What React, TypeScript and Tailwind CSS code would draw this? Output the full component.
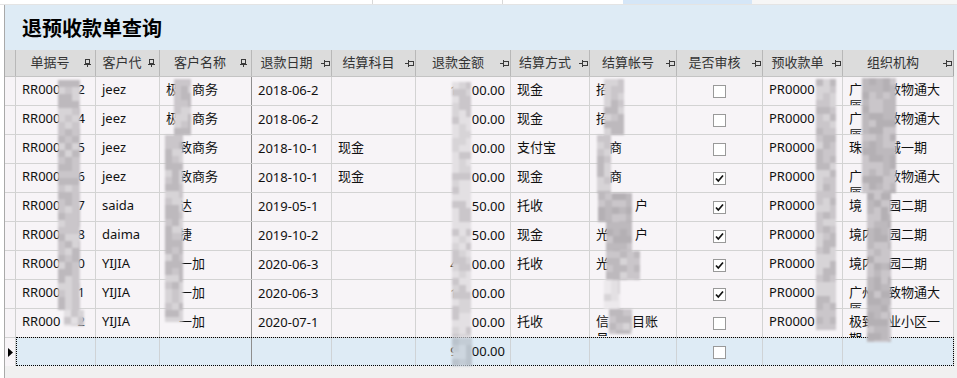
import React from 'react';

type Frag = string | number;
type Lines = Frag[][];

type Row = {
  no: Frag[];
  code: string;
  name: Frag[];
  date: string;
  subj: string;
  amt: Frag[];
  way: string;
  acct: Lines;
  chk: boolean;
  pr: string;
  org: Lines;
};

const rows: Row[] = [
  { no: ['RR000', 17, '2'], code: 'jeez', name: ['极', 13, '商务'], date: '2018-06-2', subj: '', amt: ['1', 14, '00.00'], way: '现金', acct: [['招']], chk: false, pr: 'PR0000', org: [['广', 26, '致物通大'], ['厦']] },
  { no: ['RR000', 17, '4'], code: 'jeez', name: ['极', 13, '商务'], date: '2018-06-2', subj: '', amt: [20, '00.00'], way: '现金', acct: [['招']], chk: false, pr: 'PR0000', org: [['广', 26, '致物通大'], ['厦']] },
  { no: ['RR000', 17, '5'], code: 'jeez', name: [13, '致商务'], date: '2018-10-1', subj: '现金', amt: [20, '00.00'], way: '支付宝', acct: [[13, '商']], chk: false, pr: 'PR0000', org: [['珠', 26, '城一期']] },
  { no: ['RR000', 17, '6'], code: 'jeez', name: [13, '致商务'], date: '2018-10-1', subj: '现金', amt: [20, '00.00'], way: '现金', acct: [[13, '商']], chk: true, pr: 'PR0000', org: [['广', 26, '致物通大'], ['厦']] },
  { no: ['RR000', 17, '7'], code: 'saida', name: [13, '达'], date: '2019-05-1', subj: '', amt: [20, '50.00'], way: '托收', acct: [[39, '户']], chk: true, pr: 'PR0000', org: [['境', 26, '园二期']] },
  { no: ['RR000', 17, '8'], code: 'daima', name: [13, '捷'], date: '2019-10-2', subj: '', amt: [20, '50.00'], way: '现金', acct: [['光', 26, '户']], chk: true, pr: 'PR0000', org: [['境内', 13, '园二期']] },
  { no: ['RR000', 17, '0'], code: 'YIJIA', name: [13, '一加'], date: '2020-06-3', subj: '', amt: ['4', 14, '00.00'], way: '托收', acct: [['光']], chk: true, pr: 'PR0000', org: [['境内', 13, '园二期']] },
  { no: ['RR000', 17, '1'], code: 'YIJIA', name: [13, '一加'], date: '2020-06-3', subj: '', amt: ['1', 14, '00.00'], way: '', acct: [['']], chk: true, pr: 'PR0000', org: [['广州', 13, '致物通大'], ['厦']] },
  { no: ['RR000', 17, '2'], code: 'YIJIA', name: [13, '一加'], date: '2020-07-1', subj: '', amt: [20, '00.00'], way: '托收', acct: [['信', 23, '目账'], ['号']], chk: false, pr: 'PR0000', org: [['极致', 13, '业小区一'], ['期']] },
];

function Frags({ f }: { f: Frag[] }) {
  return (
    <>
      {f.map((x, i) =>
        typeof x === 'number' ? (
          <span key={i} className="inline-block" style={{ width: x }} />
        ) : (
          <span key={i}>{x}</span>
        )
      )}
    </>
  );
}

function PinV() {
  return (
    <svg width="7" height="8" viewBox="0 0 7 8" className="shrink-0">
      <rect x="1.5" y="0.5" width="4" height="4" fill="none" stroke="#3a3a3a" />
      <line x1="0" y1="5.5" x2="7" y2="5.5" stroke="#3a3a3a" />
      <line x1="3.5" y1="5.5" x2="3.5" y2="8" stroke="#3a3a3a" />
    </svg>
  );
}

function PinH() {
  return (
    <svg width="9" height="7" viewBox="0 0 9 7" className="shrink-0">
      <line x1="0" y1="3.5" x2="3.5" y2="3.5" stroke="#3a3a3a" />
      <line x1="3.5" y1="0" x2="3.5" y2="7" stroke="#3a3a3a" />
      <rect x="3.5" y="1.5" width="5" height="4" fill="none" stroke="#3a3a3a" />
    </svg>
  );
}

function Check({ on }: { on: boolean }) {
  return (
    <div className="w-[13px] h-[13px] border border-[#999999] bg-white flex items-center justify-center">
      {on && (
        <svg width="11" height="11" viewBox="0 0 11 11">
          <path d="M2 5.5 L4.3 8 L9 2.5" fill="none" stroke="#111" strokeWidth="1.7" />
        </svg>
      )}
    </div>
  );
}

const headers: { t: string; w: string; pin: 'v' | 'h' }[] = [
  { t: '单据号', w: 'w-[80px]', pin: 'v' },
  { t: '客户代', w: 'w-[64px]', pin: 'v' },
  { t: '客户名称', w: 'w-[92px]', pin: 'v' },
  { t: '退款日期', w: 'w-[80px]', pin: 'h' },
  { t: '结算科目', w: 'w-[84px]', pin: 'h' },
  { t: '退款金额', w: 'w-[95px]', pin: 'h' },
  { t: '结算方式', w: 'w-[79px]', pin: 'h' },
  { t: '结算帐号', w: 'w-[87px]', pin: 'h' },
  { t: '是否审核', w: 'w-[86px]', pin: 'h' },
  { t: '预收款单', w: 'w-[80px]', pin: 'h' },
  { t: '组织机构', w: 'w-[111px]', pin: 'h' },
];

// mosaic smudges (privacy blur in the screenshot)
type Streak = { x0: number; x1: number; y0: number; y1: number; dark: number; blue?: boolean };
const streaks: Streak[] = [
  // 单据号
  { x0: 58, x1: 80, y0: 80, y1: 310, dark: 2 },
  { x0: 64, x1: 84, y0: 310, y1: 326, dark: 1 },
  // 客户名称
  { x0: 174, x1: 191, y0: 79, y1: 135, dark: 2 },
  { x0: 165, x1: 183, y0: 135, y1: 322, dark: 2 },
  // 退款金额
  { x0: 452, x1: 471, y0: 82, y1: 337, dark: 1 },
  { x0: 452, x1: 472, y0: 338, y1: 366, dark: 1, blue: true },
  // 结算帐号
  { x0: 604, x1: 624, y0: 79, y1: 135, dark: 2 },
  { x0: 597, x1: 611, y0: 135, y1: 193, dark: 2 },
  { x0: 598, x1: 632, y0: 193, y1: 222, dark: 3 },
  { x0: 606, x1: 632, y0: 222, y1: 251, dark: 3 },
  { x0: 606, x1: 640, y0: 251, y1: 280, dark: 2 },
  { x0: 604, x1: 620, y0: 280, y1: 309, dark: 0 },
  { x0: 609, x1: 632, y0: 309, y1: 334, dark: 2 },
  // 预收款单
  { x0: 816, x1: 836, y0: 79, y1: 330, dark: 2 },
  // 组织机构
  { x0: 862, x1: 896, y0: 78, y1: 193, dark: 3 },
  { x0: 867, x1: 891, y0: 193, y1: 342, dark: 3 },
];

const greys = ['#ece9ec', '#e3e0e3', '#d7d4d7', '#cac6ca', '#bdb9bd', '#b4b0b4'];
const blues = ['#d6e1ea', '#cdd6df', '#c3ccd5', '#bac3cc'];

function Mosaic() {
  const blocks: { x: number; y: number; w: number; h: number; c: string }[] = [];
  streaks.forEach((s, si) => {
    const step = 7;
    for (let y = s.y0; y < s.y1; y += step) {
      for (let x = s.x0; x < s.x1; x += step) {
        const h = Math.min(step, s.y1 - y);
        const w = Math.min(step, s.x1 - x);
        const r = Math.abs(Math.sin(x * 12.9898 + y * 78.233 + si * 3.1) * 43758.5453) % 1;
        const pal = s.blue ? blues : greys;
        let idx = Math.floor(r * 3) + s.dark;
        if (idx >= pal.length) idx = pal.length - 1;
        blocks.push({ x, y, w, h, c: pal[idx] });
      }
    }
  });
  return (
    <div className="absolute inset-0 pointer-events-none blur-[1px]">
      {blocks.map((b, i) => (
        <div
          key={i}
          className="absolute"
          style={{ left: b.x, top: b.y, width: b.w, height: b.h, background: b.c }}
        />
      ))}
    </div>
  );
}

export default function App() {
  const F = "font-['Noto_Sans','Noto_Sans_CJK_SC',sans-serif]";
  const cellTxt = 'overflow-hidden border-r border-[#d3d3d3] px-[6px] pt-[4px] leading-[17px] whitespace-nowrap';
  return (
    <div className={`relative w-[957px] h-[378px] overflow-hidden bg-white text-[13px] text-[#111] ${F}`}>
      {/* top tab strip remnant */}
      <div className="h-[5px] flex border-b border-[#e4e4e4] bg-white">
        <div className="w-[373px] border-r border-[#d8d8d8]" />
        <div className="w-[130px] border-r border-[#d8d8d8]" />
        <div className="w-[120px]" />
        <div className="w-[129px] bg-[#d5e6f7]" />
        <div className="flex-1 bg-[#f6f6f6]" />
      </div>

      <div className="ml-[4px] border-l border-[#a9a9a9] flex flex-col h-[373px]">
        {/* title */}
        <div className="h-[45px] bg-[#deebf5] flex items-center pl-[17px]">
          <span className="text-[20px] font-bold text-black leading-none font-['Noto_Sans_CJK_SC',sans-serif]">退预收款单查询</span>
        </div>

        {/* grid */}
        <div className="flex-1 bg-[#f0f0f0] flex flex-col">
          {/* header */}
          <div className="flex h-[27px] w-[949px] bg-[#dcdcdc] border-b border-[#c4c4c4] text-[#333333]">
            <div className="w-[11px] border-r border-[#b8b8b8]" />
            {headers.map((h, i) => (
              <div
                key={i}
                className={`${h.w} flex items-center border-r ${i === 10 ? 'border-[#a8a8a8]' : 'border-[#b8b8b8]'} ${h.pin === 'v' ? 'pr-[4px]' : 'pr-[1px]'}`}
              >
                <span className="flex-1 text-center whitespace-nowrap">{h.t}</span>
                {h.pin === 'v' ? <PinV /> : <PinH />}
              </div>
            ))}
          </div>

          {/* rows */}
          {rows.map((r, i) => (
            <div key={i} className="flex h-[29px] w-[949px] bg-[#f7f4f7] border-b border-[#d3d3d3]">
              <div className="w-[11px] border-r border-[#d0d0d0]" />
              <div className={`w-[80px] ${cellTxt}`}><Frags f={r.no} /></div>
              <div className={`w-[64px] ${cellTxt}`}>{r.code}</div>
              <div className="w-[92px] overflow-hidden border-r border-[#8e8e8e] px-[6px] pt-[4px] leading-[17px] whitespace-nowrap"><Frags f={r.name} /></div>
              <div className="w-[80px] overflow-hidden border-r border-[#d3d3d3] px-[6px] flex items-center whitespace-nowrap">{r.date}</div>
              <div className={`w-[84px] ${cellTxt}`}>{r.subj}</div>
              <div className="w-[95px] overflow-hidden border-r border-[#d3d3d3] pr-[5px] flex items-center justify-end whitespace-nowrap"><Frags f={r.amt} /></div>
              <div className={`w-[79px] ${cellTxt}`}>{r.way}</div>
              <div className={`w-[87px] ${cellTxt}`}>
                {r.acct.map((l, j) => (<div key={j}><Frags f={l} /></div>))}
              </div>
              <div className="w-[86px] border-r border-[#d3d3d3] flex items-center justify-center"><Check on={r.chk} /></div>
              <div className={`w-[80px] ${cellTxt}`}>{r.pr}</div>
              <div className={`w-[111px] ${cellTxt}`}>
                {r.org.map((l, j) => (<div key={j}><Frags f={l} /></div>))}
              </div>
            </div>
          ))}

          {/* new row */}
          <div className="relative flex h-[28px] w-[949px]">
            <div className="w-[11px] bg-[#f7f4f7] border-r border-[#d0d0d0] flex items-center justify-center">
              <svg width="5" height="9" viewBox="0 0 5 9"><polygon points="0,0 5,4.5 0,9" fill="#000" /></svg>
            </div>
            <div className="flex flex-1 bg-[#deebf5]">
              <div className="w-[80px] border-r border-[#cfd3d6]" />
              <div className="w-[64px] border-r border-[#cfd3d6]" />
              <div className="w-[92px] border-r border-[#8e8e8e]" />
              <div className="w-[80px] border-r border-[#cfd3d6]" />
              <div className="w-[84px] border-r border-[#cfd3d6]" />
              <div className="w-[95px] border-r border-[#cfd3d6] pr-[5px] flex items-center justify-end whitespace-nowrap"><Frags f={['9', 14, '00.00']} /></div>
              <div className="w-[79px] border-r border-[#cfd3d6]" />
              <div className="w-[87px] border-r border-[#cfd3d6]" />
              <div className="w-[86px] border-r border-[#cfd3d6] flex items-center justify-center"><Check on={false} /></div>
              <div className="w-[80px] border-r border-[#cfd3d6]" />
              <div className="w-[111px] border-r border-[#cfd3d6]" />
            </div>
            <div className="absolute left-[11px] right-0 top-[-1px] bottom-0 border border-dotted border-black pointer-events-none" />
          </div>
        </div>
      </div>

      <Mosaic />
    </div>
  );
}
